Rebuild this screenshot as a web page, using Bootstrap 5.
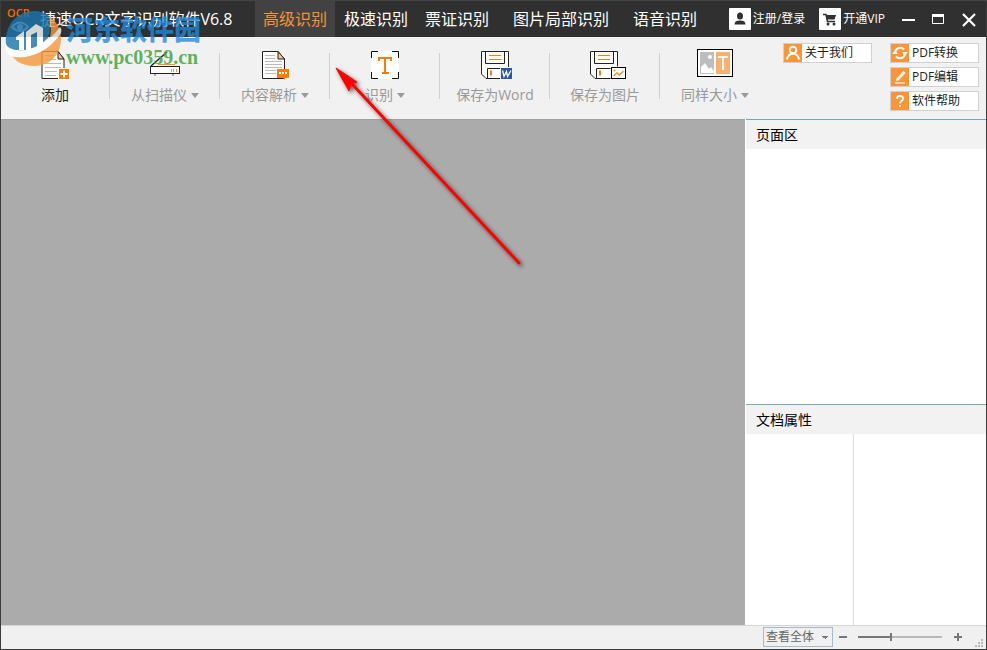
<!DOCTYPE html>
<html lang="zh-CN">
<head>
<meta charset="utf-8">
<meta name="viewport" content="width=device-width, initial-scale=1">
<title>捷速OCR文字识别软件V6.8</title>
<link href="https://cdn.jsdelivr.net/npm/bootstrap@5.3.0/dist/css/bootstrap.min.css" rel="stylesheet">
<style>
body{font-family:"Open Sans","Noto Sans CJK SC",sans-serif;font-size:14px;line-height:20px;color:#000}
button{font-family:inherit}
svg{display:block;flex:none}
.app-window{border:1px solid #3c3c3c;border-top-color:#444;background:#f1f1f1}
.title-bar{height:36px;background:#303030;color:#fff;font-size:16px}
.app-brand{width:254px;padding-left:6px;gap:8px}
.app-name{line-height:36px;font-size:16px}
.mode-tabs{--bs-nav-link-color:#fff;--bs-nav-link-hover-color:#ff9436;column-gap:1px}
.mode-tabs .nav-link{padding:0 8px;line-height:36px;font-size:16px}
.mode-tabs .nav-link.active{background:#424242;color:#f79237}
.mode-tabs .wide-tab{padding:0 15px}
.title-tools{gap:14px;padding-right:9px}
.window-btns{gap:17px;padding-left:3px}
.plain-btn{border:0;background:none;padding:0;color:inherit}
.account-btn{font-size:12px;gap:2px;line-height:20px}
.tool-bar{height:83px;border-bottom:1px solid #a0a0a0}
.tool-item{width:110px;padding:10px 2px 0 0;color:#999;font-size:14px;line-height:20px}
.tool-item svg.tool-icon{width:48px;height:36px}
.tool-item .tool-label{gap:4px;padding-top:2px}
.tool-item.ready{color:#222}
.tool-split{width:1px;height:46px;background:#cfcfcf;margin:16px 1px 0 -2px}
.caret{width:0;height:0;border:4px solid transparent;border-top:5px solid #999;border-bottom:0}
.quick-links{padding:6px 7px 0 0;gap:18px}
.quick-col{gap:4px}
.quick-btn{width:89px;height:20px;border:1px solid #d0d0d0;background:#fff;font-size:12px;line-height:18px;color:#222;gap:3px}
.canvas-area{background:#ababab;min-width:0}
.side-panel{width:241px;background:#fff;border-left:1px solid #fff;margin-top:-1px}
.pane-title{font-size:14px;line-height:29px;height:30px;padding-left:10px;margin:0;background:#f2f2f2;border-top:1px solid #78a9b5;font-weight:400}
.pages-pane{flex:255 1 0}
.props-pane{flex:191 1 0}
.props-name{width:108px;border-right:1px solid #dcdcdc}
.status-bar{height:24px;border-top:1px solid #d5d5d5;background:#f0f0f0}
.zoom-select{width:70px;height:20px;appearance:none;border:1px solid #a4b8d0;border-radius:0;padding:0 2px;font-size:12px;line-height:16px;color:#666;background:linear-gradient(to bottom left,#777 50%,transparent 50%) 58px 8px/3px 3px no-repeat,linear-gradient(to bottom right,#777 50%,transparent 50%) 61px 8px/3px 3px no-repeat,#f0f0f0}
.zoom-set{gap:5px;padding-bottom:2px}
.zoom-range{appearance:none;width:84px;height:20px;margin:0 6px 0 5px;background:none}
.zoom-range::-webkit-slider-runnable-track{height:2px;background:linear-gradient(to right,#777 40%,#b8b8b8 40%)}
.zoom-range::-webkit-slider-thumb{appearance:none;width:2px;height:8px;margin-top:-3px;background:#777}
.overlay-layer{position:absolute;left:0;top:0;pointer-events:none;z-index:5}
.site-mark{position:absolute;left:65px;top:12px;pointer-events:none;z-index:4}
.site-name{font-size:27px;line-height:32px;font-weight:900;font-family:"Noto Sans CJK SC",sans-serif;color:rgba(31,139,225,.78)}
.site-url{font-family:"Liberation Serif",serif;font-weight:700;font-size:20px;line-height:24px;color:rgba(70,165,65,.85)}
</style>
<script src="https://cdn.jsdelivr.net/npm/bootstrap@5.3.0/dist/js/bootstrap.bundle.min.js"></script>
</head>
<body>
<div class="app-window vh-100 d-flex flex-column overflow-hidden position-relative">
  <header class="title-bar d-flex align-items-center flex-shrink-0">
    <div class="app-brand d-flex align-items-center flex-shrink-0">
      <svg width="25" height="30" viewBox="0 0 25 30"><text x="0" y="13" font-size="11" font-weight="600" fill="#ed6d12">OCR</text><path d="M5 23Q13 14 21 23Q13 31 5 23Z" fill="none" stroke="#d2d2c8" stroke-width="2"/><circle cx="13" cy="23" r="3" fill="#d2d2c8"/></svg>
      <span class="app-name text-nowrap">捷速OCR文字识别软件V6.8</span>
    </div>
    <nav class="mode-tabs nav flex-nowrap text-nowrap">
      <a class="nav-link active" href="#">高级识别</a>
      <a class="nav-link" href="#">极速识别</a>
      <a class="nav-link" href="#">票证识别</a>
      <a class="nav-link wide-tab" href="#">图片局部识别</a>
      <a class="nav-link" href="#">语音识别</a>
    </nav>
    <div class="title-tools d-flex align-items-center ms-auto">
      <button class="plain-btn account-btn d-flex align-items-center text-nowrap"><svg width="22" height="22" viewBox="0 0 22 22"><rect width="22" height="22" rx="1" fill="#fff"/><ellipse cx="11" cy="8" rx="3" ry="3.500" fill="#303030"/><path d="M5.500 16.500Q5.500 12.500 11 12.500T16.500 16.500Z" fill="#303030"/></svg>注册/登录</button>
      <button class="plain-btn account-btn d-flex align-items-center text-nowrap"><svg width="22" height="22" viewBox="0 0 22 22"><rect width="22" height="22" rx="1" fill="#fff"/><path d="M4 6.500H7L8.500 13.500H16" fill="none" stroke="#303030" stroke-width="1.500"/><path d="M7 7H17L15.500 11.500H8Z" fill="#303030"/><circle cx="9" cy="16" r="1.500" fill="#303030"/><circle cx="15" cy="16" r="1.500" fill="#303030"/></svg>开通VIP</button>
      <div class="window-btns d-flex align-items-center">
        <button class="plain-btn" aria-label="最小化"><svg width="13" height="16" viewBox="0 0 13 16"><path d="M0 9H13" stroke="#fff" stroke-width="2"/></svg></button>
        <button class="plain-btn" aria-label="最大化"><svg width="12" height="16" viewBox="0 0 12 16"><path d="M.5 3V12.500H11.500V3" fill="none" stroke="#fff"/><path d="M0 4.500H12" stroke="#fff" stroke-width="3"/></svg></button>
        <button class="plain-btn" aria-label="关闭"><svg width="16" height="16" viewBox="0 0 16 16"><path d="M2 3L14 15M14 3L2 15" stroke="#fff" stroke-width="2.200"/></svg></button>
      </div>
    </div>
  </header>

  <div class="tool-bar d-flex flex-shrink-0">
    <button class="plain-btn tool-item ready d-flex flex-column align-items-center">
      <svg class="tool-icon" viewBox="0 0 48 36"><path d="M11 4.500H27L33 12V31.500H11Z" fill="#fff" stroke="#222"/><path d="M27 4.500V12H33Z" fill="#fac28c" stroke="#222"/><path d="M14 8.500H24M14 12.500H25M14 16.500H30M14 20.500H30M14 24.500H26M14 28.500H25" stroke="#bbb"/><rect x="27.500" y="21.500" width="11" height="11" fill="#fa7d0a" stroke="#fff"/><path d="M33 23.500V30.500M29.500 27H36.500" stroke="#fff" stroke-width="2"/></svg>
      <span class="tool-label d-flex align-items-center">添加</span></button>
    <span class="tool-split"></span>
    <button class="plain-btn tool-item d-flex flex-column align-items-center">
      <svg class="tool-icon" viewBox="0 0 48 36"><path d="M10 19L26 5" stroke="#222" stroke-width="1.500"/><path d="M17 17.500H34" stroke="#fa8d30"/><rect x="9.500" y="19.500" width="29" height="7" fill="#fff" stroke="#222"/><path d="M30.500 22V25M32.500 22V25M35.500 22V25" stroke="#fa8d30"/><path d="M14 27V29M32 27V29" stroke="#aaa" stroke-width="2"/></svg>
      <span class="tool-label d-flex align-items-center">从扫描仪<i class="caret"></i></span></button>
    <span class="tool-split"></span>
    <button class="plain-btn tool-item d-flex flex-column align-items-center">
      <svg class="tool-icon" viewBox="0 0 48 36"><path d="M11.500 4.500H27L33.500 12V31.500H11.500Z" fill="#fff" stroke="#222"/><path d="M27 4.500V12H33.500Z" fill="#fac28c" stroke="#222"/><path d="M14 8.500H24M14 11.500H24M14 14.500H31M14 17.500H31M14 20.500H31M14 23.500H25M14 26.500H25" stroke="#bbb"/><path d="M26 22H38V31H34V33L32 31H26Z" fill="#fa7d0a"/><path d="M28 26H30M31 26H33M34 26H36" stroke="#fff" stroke-width="2"/></svg>
      <span class="tool-label d-flex align-items-center">内容解析<i class="caret"></i></span></button>
    <span class="tool-split"></span>
    <button class="plain-btn tool-item d-flex flex-column align-items-center">
      <svg class="tool-icon" viewBox="0 0 48 36"><rect x="10" y="4" width="28" height="28" fill="#fff"/><path d="M10.500 11V4.500H17M31 4.500H37.500V11M10.500 25V31.500H17M31 31.500H37.500V25" fill="none" stroke="#111"/><path d="M18 14V11H30V14M24 11V26M21 26H28" fill="none" stroke="#fa7d0a" stroke-width="2"/></svg>
      <span class="tool-label d-flex align-items-center">识别<i class="caret"></i></span></button>
    <span class="tool-split"></span>
    <button class="plain-btn tool-item d-flex flex-column align-items-center">
      <svg class="tool-icon" viewBox="0 0 48 36"><path d="M10.500 4.500H37.500V31.500H15L10.500 27Z" fill="#fff" stroke="#222"/><path d="M14.500 4.500V16.500H33.500V4.500M16.500 31.500V21.500H33" fill="none" stroke="#222"/><path d="M18 8.500H30M18 12.500H30" stroke="#fa7d0a"/><path d="M20 23.500V28.500" stroke="#fa7d0a" stroke-width="2"/><rect x="29.500" y="20.500" width="12" height="12" fill="#2959a4" stroke="#f1f1f1"/><path d="M31.500 23.500L33 29.500L35.500 24.500L36.500 29.500L40 23.500" fill="none" stroke="#fff" stroke-width="1.300"/></svg>
      <span class="tool-label d-flex align-items-center">保存为Word</span></button>
    <span class="tool-split"></span>
    <button class="plain-btn tool-item d-flex flex-column align-items-center">
      <svg class="tool-icon" viewBox="0 0 48 36"><path d="M9.500 4.500H36.500V31.500H14L9.500 27Z" fill="#fff" stroke="#222"/><path d="M13.500 4.500V16.500H32.500V4.500M15.500 31.500V21.500H30" fill="none" stroke="#222"/><path d="M17 8.500H29M17 12.500H29" stroke="#fa7d0a"/><path d="M19 23.500V28.500" stroke="#fa7d0a" stroke-width="2"/><rect x="29.500" y="19.500" width="16" height="13" fill="#f1f1f1"/><rect x="30.500" y="20.500" width="14" height="11" fill="#fff" stroke="#000"/><path d="M32.500 29L36 26L38.500 28L42.500 24" fill="none" stroke="#fa8d30" stroke-width="1.500"/><circle cx="33.500" cy="23.500" r="1" fill="#fa8d30"/></svg>
      <span class="tool-label d-flex align-items-center">保存为图片</span></button>
    <span class="tool-split"></span>
    <button class="plain-btn tool-item d-flex flex-column align-items-center">
      <svg class="tool-icon" viewBox="0 0 48 36"><rect x="6.500" y="2.500" width="35" height="27" fill="#fff" stroke="#000"/><rect x="9" y="5" width="14" height="22" fill="#bdbdbd"/><rect x="25" y="5" width="14" height="22" fill="#fbb071"/><circle cx="19" cy="10" r="2" fill="#fff"/><path d="M10 26L10 20L14 16L18 22L20 20L23 24V26Z" fill="#fff"/><path d="M27 10H37M32 10V23" stroke="#fff" stroke-width="2"/></svg>
      <span class="tool-label d-flex align-items-center">同样大小<i class="caret"></i></span></button>

    <div class="quick-links d-flex align-items-start ms-auto">
      <button class="plain-btn quick-btn d-flex text-nowrap"><svg width="18" height="18" viewBox="0 0 18 18"><path fill="#ff9436" d="M0 0H18V18H0Z"/><g fill="none" stroke="#fff" stroke-width="2"><circle cx="9" cy="6" r="3.300"/><path d="M3 15.500Q4 10 9 9.500Q14 10 15 15.500"/></g></svg>关于我们</button>
      <div class="quick-col d-flex flex-column">
        <button class="plain-btn quick-btn d-flex text-nowrap"><svg width="18" height="18" viewBox="0 0 18 18"><path fill="#ff9436" d="M0 0H18V18H0Z"/><path d="M4 8A5.200 5.200 0 0 1 13 5.500M14 10A5.200 5.200 0 0 1 5 12.500" fill="none" stroke="#fff" stroke-width="2"/><path d="M11 8H17L14 11.500ZM1 10H7L4 6.500Z" fill="#fff"/></svg>PDF转换</button>
        <button class="plain-btn quick-btn d-flex text-nowrap"><svg width="18" height="18" viewBox="0 0 18 18"><path fill="#ff9436" d="M0 0H18V18H0Z"/><path d="M5 13L5.500 10.500L12.500 3L14.500 5L7.500 12.500Z" fill="#fff"/><path d="M4 15H14" stroke="#fff" stroke-width="1.200"/></svg>PDF编辑</button>
        <button class="plain-btn quick-btn d-flex text-nowrap"><svg width="18" height="18" viewBox="0 0 18 18"><path fill="#ff9436" d="M0 0H18V18H0Z"/><path d="M6 7Q6 4 9 4T12 6.500Q12 8 10.500 9Q9 10 9 11.500" fill="none" stroke="#fff" stroke-width="2"/><path d="M9 13V15" stroke="#fff" stroke-width="2"/></svg>软件帮助</button>
      </div>
    </div>
  </div>

  <main class="d-flex flex-grow-1">
    <section class="canvas-area flex-grow-1" aria-label="画布"></section>
    <aside class="side-panel d-flex flex-column flex-shrink-0">
      <h2 class="pane-title">页面区</h2>
      <div class="pages-pane"></div>
      <h2 class="pane-title">文档属性</h2>
      <div class="props-pane d-flex"><div class="props-name"></div></div>
    </aside>
  </main>

  <footer class="status-bar d-flex align-items-center justify-content-end flex-shrink-0">
    <div class="zoom-set d-flex align-items-center">
      <select class="zoom-select" aria-label="缩放方式"><option>查看全体</option></select>
      <button class="plain-btn" aria-label="缩小"><svg width="10" height="10" viewBox="0 0 10 10"><path d="M1 5H9" stroke="#777" stroke-width="2"/></svg></button>
      <input class="zoom-range" type="range" min="0" max="100" value="39" aria-label="缩放比例">
      <button class="plain-btn" aria-label="放大"><svg width="10" height="10" viewBox="0 0 10 10"><path d="M1 5H9M5 1V9" stroke="#777" stroke-width="2"/></svg></button>
    </div>
    <svg class="ms-2 align-self-end" width="15" height="12" viewBox="0 0 15 12"><path d="M10 2h2v2h-2zM7 5h2v2h-2zM10 5h2v2h-2zM4 8h2v2h-2zM7 8h2v2h-2zM10 8h2v2h-2z" fill="#bbb"/></svg>
  </footer>

  <svg class="overlay-layer" width="540" height="280" viewBox="1 1 540 280">
    <defs><filter id="arrowShade" x="-10%" y="-10%" width="130%" height="130%"><feDropShadow dx="2" dy="2" stdDeviation="2" flood-color="#000" flood-opacity=".65"/></filter></defs>
    <g opacity=".8">
      <path d="M49 16A28 27 0 0 1 61 38Q61 54 49 62Q34 70 18 62L12 56Q33 56 46 44Q54 36 49 16Z" fill="#f4993c"/>
      <path d="M6 45C4 27 15 12 34 11Q43 11 49 16Q52 27 48 38Q37 50 18 52Q8 52 6 45Z" fill="#1b75ad"/>
      <path d="M16 37L24 31V50H19V40H16ZM26 32L36 24L43 28V45L37 48V32L31 35V50H26Z" fill="#fff"/>
      <path d="M5 42Q8 52 25 50Q46 46 60 27Q62 29 61 33Q48 53 25 57Q8 59 6 50Z" fill="#fff"/>
    </g>
    <g filter="url(#arrowShade)"><path d="M353 85L519 263" stroke="#f00" stroke-width="3" stroke-linecap="round"/><path d="M336 68L357 82L351 84L349 91Z" fill="#f00" stroke="#f00"/></g>
  </svg>
  <div class="site-mark"><div class="site-name text-nowrap">河东软件园</div><div class="site-url">www.pc0359.cn</div></div>
</div>
</body>
</html>
